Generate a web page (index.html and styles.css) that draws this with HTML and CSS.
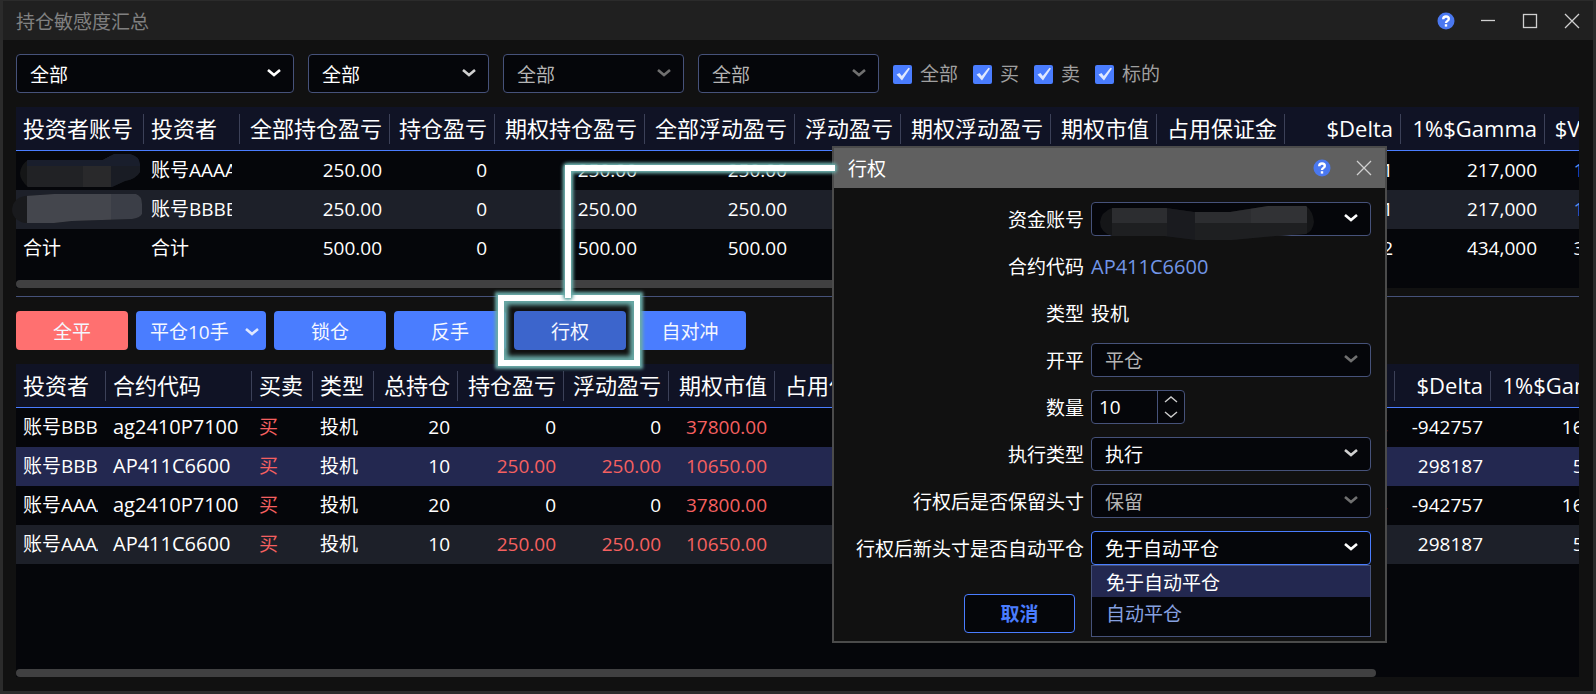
FILE: index.html
```html
<!DOCTYPE html>
<html lang="zh-CN">
<head>
<meta charset="utf-8">
<title>持仓敏感度汇总</title>
<link rel="stylesheet" href="styles.css">
</head>
<body>
<svg class="defs" aria-hidden="true">
  <symbol id="i-help" viewBox="0 0 18 18"><circle cx="9" cy="9" r="8.5" fill="#4a78f0"/><path d="M6.2 7.2C6.2 5.4 7.4 4.5 9 4.5s2.8 1 2.8 2.5C11.800 8.900 9 8.900 9 11" fill="none" stroke="#fff" stroke-width="2.400"/><rect x="7.800" y="12.200" width="2.400" height="2.400" fill="#fff"/></symbol>
  <symbol id="i-min" viewBox="0 0 18 18"><path d="M2 8.500h14" stroke="currentColor" stroke-width="1.300"/></symbol>
  <symbol id="i-max" viewBox="0 0 18 18"><rect x="2.500" y="2.500" width="13" height="13" fill="none" stroke="currentColor" stroke-width="1.300"/></symbol>
  <symbol id="i-close" viewBox="0 0 18 18"><path d="M2 2l14 14M16 2L2 16" stroke="currentColor" stroke-width="1.300"/></symbol>
  <symbol id="i-down" viewBox="0 0 16 10"><path d="M2 2l6 5 6-5" fill="none" stroke="currentColor" stroke-width="2.600"/></symbol>
  <symbol id="i-tick" viewBox="0 0 20 20"><path d="M3.500 10.500L6.500 9l2.300 3L15.500 3.800 17 4.500 9 16.500z" fill="#dfe8ff"/></symbol>
</svg>

<main class="window">
  <header class="titlebar">
    <h1 class="title">持仓敏感度汇总</h1>
    <div class="window-buttons">
      <button class="icon-btn" aria-label="帮助"><svg><use href="#i-help"/></svg></button>
      <button class="icon-btn" aria-label="最小化"><svg><use href="#i-min"/></svg></button>
      <button class="icon-btn" aria-label="最大化"><svg><use href="#i-max"/></svg></button>
      <button class="icon-btn" aria-label="关闭"><svg><use href="#i-close"/></svg></button>
    </div>
  </header>

  <div class="content">
    <div class="filters">
      <div class="select wide"><select aria-label="账号"><option>全部</option></select><svg><use href="#i-down"/></svg></div>
      <div class="select dimarrow"><select aria-label="品种"><option>全部</option></select><svg><use href="#i-down"/></svg></div>
      <div class="select off"><select aria-label="标的" disabled><option>全部</option></select><svg><use href="#i-down"/></svg></div>
      <div class="select off"><select aria-label="到期月" disabled><option>全部</option></select><svg><use href="#i-down"/></svg></div>
      <div class="checks">
        <label class="check"><input type="checkbox" checked><svg><use href="#i-tick"/></svg>全部</label>
        <label class="check"><input type="checkbox" checked><svg><use href="#i-tick"/></svg>买</label>
        <label class="check"><input type="checkbox" checked><svg><use href="#i-tick"/></svg>卖</label>
        <label class="check"><input type="checkbox" checked><svg><use href="#i-tick"/></svg>标的</label>
      </div>
    </div>

    <section class="panel summary">
      <div class="clip">
        <table class="grid">
          <colgroup><col class="w128"><col class="w96"><col class="w150"><col class="w105"><col class="w150"><col class="w150"><col class="w106"><col class="w150"><col class="w106"><col class="w128"><col class="w116"><col class="w144"><col class="w80"></colgroup>
          <thead><tr><th class="l">投资者账号</th><th class="l">投资者</th><th>全部持仓盈亏</th><th>持仓盈亏</th><th>期权持仓盈亏</th><th>全部浮动盈亏</th><th>浮动盈亏</th><th>期权浮动盈亏</th><th>期权市值</th><th>占用保证金</th><th>$Delta</th><th>1%$Gamma</th><th>$Vega</th></tr></thead>
          <tbody>
            <tr><td></td><td class="l"><span>账号AAAA</span></td><td>250.00</td><td>0</td><td>250.00</td><td>250.00</td><td></td><td></td><td></td><td></td><td>1</td><td>217,000</td><td class="blue">1000</td></tr>
            <tr class="alt"><td></td><td class="l"><span>账号BBBB</span></td><td>250.00</td><td>0</td><td>250.00</td><td>250.00</td><td></td><td></td><td></td><td></td><td>1</td><td>217,000</td><td class="blue">1000</td></tr>
            <tr><td class="l">合计</td><td class="l">合计</td><td>500.00</td><td>0</td><td>500.00</td><td>500.00</td><td></td><td></td><td></td><td></td><td>2</td><td>434,000</td><td>3000</td></tr>
          </tbody>
        </table>
      </div>
      <div class="scrollbar"></div>
      <svg class="mask" viewBox="0 0 132 70" aria-hidden="true">
        <clipPath id="m1"><path d="M16 6H91L102 0H118Q127 2 128 10V18Q124 25 113 27L100 33H16Q8 26 8 19Q9 10 16 6Z"/></clipPath>
        <g clip-path="url(#m1)"><path fill="#151617" d="M0 0h132v36H0z"/><path fill="#212225" d="M15 0h56v36H15z"/><path fill="#29292b" d="M71 0h28v36H71z"/><path fill="#191e2c" d="M15 0h113v12H15z"/><path fill="#191c24" d="M99 12h32v24H99z"/></g>
        <clipPath id="m2"><path d="M13 42L42 40H124Q130 42 130 50V60Q128 64 120 65L60 67L42 69H13Q0 66 0 55Q1 44 13 42Z"/></clipPath>
        <g clip-path="url(#m2)"><path fill="#191a1d" d="M0 36h132v34H0z"/><path fill="#44464d" d="M15 36h84v34H15z"/><path fill="#3b3e47" d="M99 36h33v34H99z"/></g>
      </svg>
    </section>

    <hr class="divider">

    <div class="actions">
      <button class="btn danger">全平</button>
      <button class="btn split">平仓10手<svg><use href="#i-down"/></svg></button>
      <button class="btn">锁仓</button>
      <button class="btn">反手</button>
      <button class="btn active">行权</button>
      <button class="btn">自对冲</button>
    </div>

    <section class="panel positions">
      <div class="clip">
        <table class="grid">
          <colgroup><col class="w90"><col class="w146"><col class="w61"><col class="w61"><col class="w84"><col class="w106"><col class="w105"><col class="w106"><col class="w128"><col class="w492"><col class="w96"><col class="w144"></colgroup>
          <thead><tr><th class="l">投资者</th><th class="l">合约代码</th><th class="l">买卖</th><th class="l">类型</th><th>总持仓</th><th>持仓盈亏</th><th>浮动盈亏</th><th>期权市值</th><th>占用保证金</th><th>Delta</th><th>$Delta</th><th>1%$Gamma</th></tr></thead>
          <tbody>
            <tr><td class="l"><span>账号BBBB</span></td><td class="l code">ag2410P7100</td><td class="l red">买</td><td class="l">投机</td><td>20</td><td>0</td><td>0</td><td class="red">37800.00</td><td></td><td>4</td><td>-942757</td><td>160000</td></tr>
            <tr class="selected"><td class="l"><span>账号BBBB</span></td><td class="l code">AP411C6600</td><td class="l red">买</td><td class="l">投机</td><td>10</td><td class="red">250.00</td><td class="red">250.00</td><td class="red">10650.00</td><td></td><td class="red">8</td><td>298187</td><td>50000</td></tr>
            <tr><td class="l"><span>账号AAAA</span></td><td class="l code">ag2410P7100</td><td class="l red">买</td><td class="l">投机</td><td>20</td><td>0</td><td>0</td><td class="red">37800.00</td><td></td><td>4</td><td>-942757</td><td>160000</td></tr>
            <tr class="alt"><td class="l"><span>账号AAAA</span></td><td class="l code">AP411C6600</td><td class="l red">买</td><td class="l">投机</td><td>10</td><td class="red">250.00</td><td class="red">250.00</td><td class="red">10650.00</td><td></td><td class="red">8</td><td>298187</td><td>50000</td></tr>
          </tbody>
        </table>
      </div>
      <div class="scrollbar"></div>
    </section>
  </div>

  <section class="dialog" role="dialog" aria-labelledby="dlg-title">
    <header class="dialog-bar">
      <h2 class="title" id="dlg-title">行权</h2>
      <div class="window-buttons">
        <button class="icon-btn" aria-label="帮助"><svg><use href="#i-help"/></svg></button>
        <button class="icon-btn" aria-label="关闭"><svg><use href="#i-close"/></svg></button>
      </div>
    </header>
    <form class="form">
      <label for="acct">资金账号</label>
      <div class="select"><select id="acct"><option></option></select><svg><use href="#i-down"/></svg>
        <svg class="acct-mask" viewBox="0 0 214 34" aria-hidden="true">
          <clipPath id="m3"><path d="M12 2H66L94 6H130L168 0H206Q213 5 214 16Q213 25 206 28L176 30L132 34H96L64 30H12Q0 26 0 16Q1 6 12 2Z"/></clipPath>
          <g clip-path="url(#m3)"><path fill="#151618" d="M0 0h214v34H0z"/><path fill="#2c2d30" d="M12 0h28v17H12zM40 0h27v17H40zM95 0h56v17H95z"/><path fill="#313235" d="M151 0h56v17h-56z"/><path fill="#1e1f21" d="M12 17h55v17H12zM95 17h112v17H95z"/><path fill="#1a1b1f" d="M67 0h28v34H67z"/></g>
        </svg>
      </div>
      <span class="name">合约代码</span><output class="code blue">AP411C6600</output>
      <span class="name">类型</span><output>投机</output>
      <label for="oc">开平</label>
      <div class="select off"><select id="oc" disabled><option>平仓</option></select><svg><use href="#i-down"/></svg></div>
      <label for="qty">数量</label>
      <div class="spin"><input id="qty" type="text" value="10"><div class="steps"><button type="button" aria-label="增加"><svg viewBox="0 0 14 8"><path d="M1 7l6-5 6 5"/></svg></button><button type="button" aria-label="减少"><svg viewBox="0 0 14 8"><path d="M1 1l6 5 6-5"/></svg></button></div></div>
      <label for="exec">执行类型</label>
      <div class="select dimarrow"><select id="exec"><option>执行</option></select><svg><use href="#i-down"/></svg></div>
      <label for="keep">行权后是否保留头寸</label>
      <div class="select off"><select id="keep" disabled><option>保留</option></select><svg><use href="#i-down"/></svg></div>
      <label for="auto">行权后新头寸是否自动平仓</label>
      <div class="select open"><select id="auto"><option>免于自动平仓</option></select><svg><use href="#i-down"/></svg>
        <ul class="menu" role="listbox" aria-label="行权后新头寸是否自动平仓"><li class="on" role="option" aria-selected="true">免于自动平仓</li><li role="option" aria-selected="false">自动平仓</li></ul>
      </div>
    </form>
    <footer class="dialog-foot"><button class="cancel">取消</button></footer>
  </section>

  <div class="callout-frame"></div>
  <div class="callout-line"></div>
</main>
</body>
</html>
```
FILE: styles.css
```css
* { box-sizing: border-box; }
body {
  margin: 0;
  background: #111;
  color: #fff;
  font: 19px/24px "Open Sans", "Noto Sans CJK SC", sans-serif;
}
button, select, input { font: inherit; color: inherit; margin: 0; padding: 0; border: 0; background: none; }
h1, h2, ul { margin: 0; padding: 0; font: inherit; list-style: none; }
.defs { position: absolute; width: 0; height: 0; }

.window {
  position: relative;
  display: flex;
  flex-direction: column;
  min-height: 100vh;
  border: 3px solid #2b2b2b;
  border-top-width: 1px;
  overflow: hidden;
}
.titlebar {
  display: flex;
  align-items: center;
  justify-content: space-between;
  height: 39px;
  padding: 0 12px 0 13px;
  background: #202020;
  color: #808080;
}
.title { padding-top: 2px; }
.window-buttons { display: flex; gap: 24px; color: #d0d0d0; }
.icon-btn { display: block; width: 18px; height: 18px; }
.icon-btn svg { display: block; width: 18px; height: 18px; }

.content {
  flex: 1;
  display: flex;
  flex-direction: column;
  padding: 14px 14px 14px 13px;
}
.filters { display: flex; gap: 14px; margin-bottom: 14px; }
.filters .select { width: 181px; height: 39px; }
.filters .wide { width: 278px; }
.select { position: relative; background: #05060a; border: 1px solid #46527a; border-radius: 4px; }
.select select { display: block; width: 100%; height: 100%; padding: 2px 36px 0 13px; appearance: none; outline: 0; opacity: 1; }
.select > svg:not(.acct-mask) { position: absolute; right: 11px; top: calc(50% - 6px); width: 16px; height: 10px; pointer-events: none; }
.dimarrow > svg { color: #d0d0d0; }
.off { color: #b4b4b4; }
.off > svg { color: #707070; }
.checks { display: flex; align-items: center; gap: 15px; padding-top: 1px; color: #a0a0a0; }
.check { position: relative; display: flex; align-items: center; gap: 8px; }
.check input {
  appearance: none;
  width: 19px;
  height: 19px;
  border-radius: 2px;
  background: #4a7dff;
}
.check svg { position: absolute; left: 0; top: 2px; width: 20px; height: 20px; pointer-events: none; }

.panel { position: relative; display: flex; flex-direction: column; background: #05060a; }
.clip { overflow: hidden; }
.summary .clip { padding-bottom: 12px; }
.positions { flex: 1; }
.positions .clip { flex: 1; min-height: 290px; }
.scrollbar { height: 8px; width: 86%; border-radius: 4px; background: #404041; }
.positions .scrollbar { width: 87%; }
.grid { table-layout: fixed; width: 1600px; border-collapse: separate; border-spacing: 0; }
.grid th {
  height: 44px;
  padding: 0 8px 2px 7px;
  font-size: 22px;
  line-height: 28px;
  font-weight: 400;
  text-align: right;
  white-space: nowrap;
  border-bottom: 1px solid #4a7dff;
  background: linear-gradient(#3c4158, #3c4158) right 7px / 1px 30px no-repeat #101325;
}
.grid td { height: 39px; padding: 0 8px 2px 7px; text-align: right; white-space: nowrap; }
.grid .l { text-align: left; }
.grid td span { display: block; overflow: hidden; }
.alt { background: #1d2029; }
.selected { background: #232850; }
.red { color: #f56060; }
.grid .blue { color: #5a96f0; }
.code { font-size: 20px; }
.w61 { width: 61px; } .w80 { width: 80px; } .w84 { width: 84px; } .w90 { width: 90px; }
.w96 { width: 96px; } .w105 { width: 105px; } .w106 { width: 106px; } .w116 { width: 116px; }
.w128 { width: 128px; } .w144 { width: 144px; } .w146 { width: 146px; } .w150 { width: 150px; }
.w492 { width: 492px; }
.mask { position: absolute; left: -4px; top: 47px; width: 132px; height: 70px; }

.divider { width: 100%; height: 1px; margin: 8px 0 14px; border: 0; background: #46527a; }
.actions { display: flex; gap: 8px; margin-bottom: 14px; }
.btn { width: 112px; height: 39px; padding-top: 2px; border-radius: 4px; background: #4a7dff; color: #f4f7ff; }
.danger { background: #ff7070; }
.active { background: #3c65cc; }
.split { display: flex; align-items: center; justify-content: space-between; width: 130px; padding: 2px 6px 0 14px; }
.split svg { width: 16px; height: 10px; color: #dfe8ff; }

.dialog {
  position: absolute;
  left: 829px;
  top: 145px;
  width: 555px;
  background: #111;
  border: 2px solid #4b4b4b;
}
.dialog-bar {
  display: flex;
  align-items: center;
  justify-content: space-between;
  height: 40px;
  padding: 0 12px 0 14px;
  background: #606060;
}
.form {
  display: grid;
  grid-template-columns: 1fr 280px;
  grid-auto-rows: 34px;
  gap: 13px 7px;
  align-items: center;
  padding: 14px 14px 0 0;
}
.form > label, .name, .form output { padding-top: 2px; }
.form > label, .name { text-align: right; white-space: nowrap; }
.form .select { height: 34px; }
.form .blue { color: #7296e6; }
.acct-mask { position: absolute; left: 8px; top: 3px; width: 214px; height: 34px; }
.spin { display: flex; width: 94px; height: 34px; border: 1px solid #46527a; border-radius: 4px; background: #05060a; }
.spin input { flex: 1; min-width: 0; padding-left: 7px; outline: 0; }
.steps { display: flex; flex-direction: column; width: 27px; border-left: 1px solid #46527a; }
.steps button { flex: 1; display: flex; align-items: center; justify-content: center; }
.steps svg { width: 14px; height: 8px; fill: none; stroke: #ccc; stroke-width: 1.4; }
.form .open { border-color: #4a7dff; }
.menu {
  position: absolute;
  left: -1px;
  right: -1px;
  top: 33px;
  padding-bottom: 8px;
  background: #05060a;
  border: 1px solid #46527a;
  color: #86a0e0;
}
.menu li { height: 31px; padding: 5px 14px 2px; }
.menu .on { background: #232850; color: #fff; }
.dialog-foot { padding: 29px 0 8px 130px; }
.cancel { width: 111px; height: 39px; border: 1px solid #4a7dff; border-radius: 4px; background: #05060a; color: #4a7dff; font-weight: 700; }

.callout-frame {
  position: absolute;
  left: 495px;
  top: 294px;
  width: 142px;
  height: 71px;
  border: 6px solid #fff;
  box-shadow: 0 0 3px 3px #6aaba8, inset 0 0 4px 4px #6aaba8;
  pointer-events: none;
}
.callout-line {
  position: absolute;
  left: 562px;
  top: 164px;
  width: 270px;
  height: 133px;
  border: solid #fff;
  border-width: 6px 0 0 6px;
  filter: drop-shadow(0 0 2px #6aaba8) drop-shadow(0 0 1px #6aaba8) drop-shadow(0 0 1px #6aaba8);
  pointer-events: none;
}
```
